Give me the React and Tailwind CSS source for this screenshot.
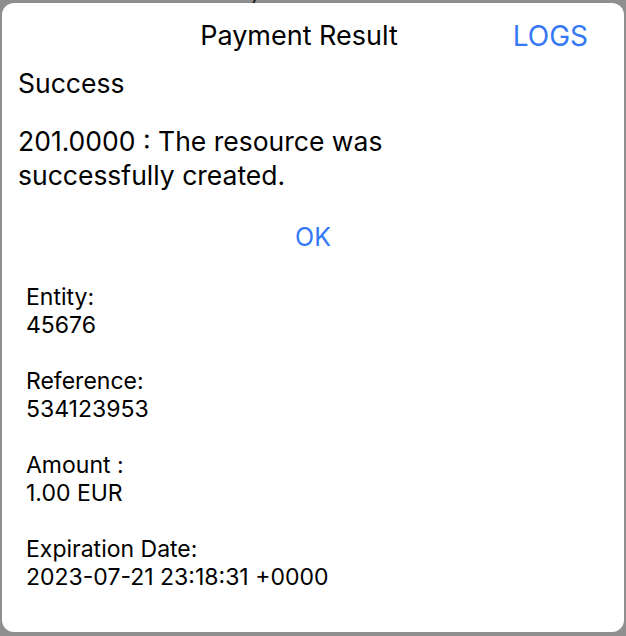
import React from 'react';

const fields = [
    { label: 'Entity:', value: '45676' },
    { label: 'Reference:', value: '534123953' },
    { label: 'Amount :', value: '1.00 EUR' },
    { label: 'Expiration Date:', value: '2023-07-21 23:18:31 +0000' },
];

const App = () => {
    return (
        <div
            className="w-[626px] h-[636px] bg-[#8e8e8e] px-[2px] pb-[4px] flex flex-col"
            style={{ fontFamily: 'Inter, "Noto Sans", sans-serif' }}
        >
            <div className="h-[3px] overflow-hidden flex justify-center">
                <span className="text-[22px] leading-[22px] text-[#1a1a1a] -mt-[19px] tracking-[2px]">Payment Result</span>
            </div>
            <div className="flex-1 bg-white rounded-[12px] text-black">
                <div className="relative h-[63px] flex items-center justify-center">
                    <h1 className="text-[27px] -ml-[28px] mt-[4px]">Payment Result</h1>
                    <button className="absolute right-[36px] top-[13px] text-[28px] leading-[40px] text-[#3478f6]">LOGS</button>
                </div>
                <div className="px-4">
                    <p className="text-[26.5px] leading-[34px]">Success</p>
                    <p className="mt-[24px] text-[26.5px] leading-[34px] w-[420px]">
                        201.0000 : The resource was successfully created.
                    </p>
                </div>
                <div className="mt-[30px] flex justify-center">
                    <button className="text-[25px] leading-[30px] text-[#3478f6]">OK</button>
                </div>
                <div className="mt-[31px] px-6 flex flex-col gap-[28px] text-[23px] leading-[28px]">
                    {fields.map((f) => (
                        <div key={f.label}>
                            <p>{f.label}</p>
                            <p>{f.value}</p>
                        </div>
                    ))}
                </div>
            </div>
        </div>
    );
};

export default App;
